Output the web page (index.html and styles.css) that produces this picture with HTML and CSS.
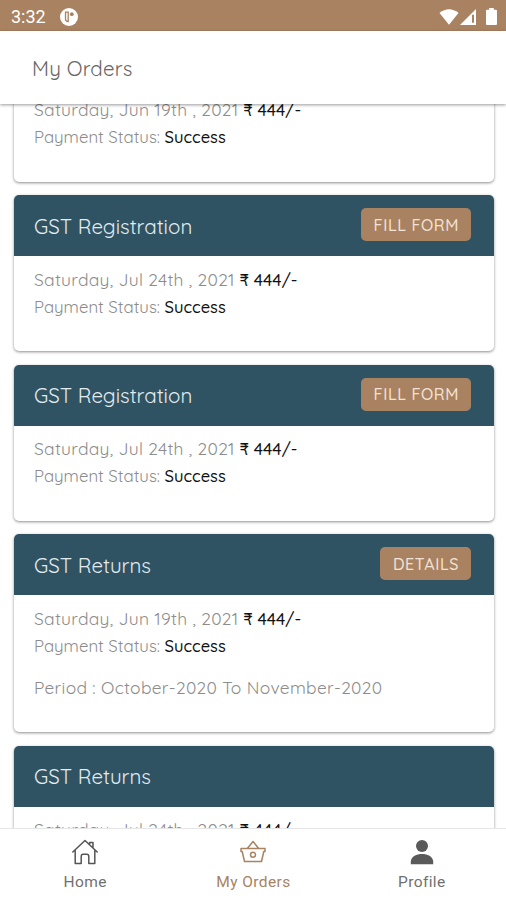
FILE: index.html
```html
<!DOCTYPE html>
<html lang="en">
<head>
    <meta charset="UTF-8">
    <meta name="viewport" content="width=device-width, initial-scale=1.0">
    <title>My Orders</title>
    <link rel="stylesheet" href="styles.css">
</head>
<body>
    <div class="status-bar">
        <span class="time">3:32</span>
        <svg class="app-badge" width="18" height="18" viewBox="0 0 18 18">
            <circle cx="9" cy="9" r="9" fill="#fff"/>
            <path d="M5.500 4.200H8.200V13.500Q5.500 13.500 5.500 11z" fill="none" stroke="#a98262" stroke-width="1.300"/>
            <circle cx="11.800" cy="6.200" r="1.900" fill="#a98262"/>
        </svg>
        <div class="status-icons">
            <svg width="20" height="16" viewBox="0 0 20 16"><path d="M0.500 4Q10 -3.500 19.500 4L10 15.700z" fill="#fff"/></svg>
            <svg width="17" height="16" viewBox="0 0 17 16"><path d="M16 0V16H0zM12 5.800V13.800H14V5.800z" fill="#fff" fill-rule="evenodd"/></svg>
            <svg class="battery" width="11" height="17" viewBox="0 0 11 17"><path d="M3.200 0h4.600v1.800H10q1 0 1 1V16q0 1-1 1H1q-1 0-1-1V2.800q0-1 1-1h2.200z" fill="#fff"/></svg>
        </div>
    </div>

    <header class="app-header">
        <h1>My Orders</h1>
    </header>

    <main class="orders">
        <div class="order-list">
            <div class="order-card">
                <div class="order-body">
                    <p><span class="date">Saturday, Jun 19th , 2021</span> <b class="price">₹ 444/-</b></p>
                    <p><span class="label">Payment Status:</span> <b class="state">Success</b></p>
                </div>
            </div>

            <div class="order-card">
                <div class="order-head"><h2>GST Registration</h2><button class="order-btn">FILL FORM</button></div>
                <div class="order-body">
                    <p><span class="date">Saturday, Jul 24th , 2021</span> <b class="price">₹ 444/-</b></p>
                    <p><span class="label">Payment Status:</span> <b class="state">Success</b></p>
                </div>
            </div>

            <div class="order-card">
                <div class="order-head"><h2>GST Registration</h2><button class="order-btn">FILL FORM</button></div>
                <div class="order-body">
                    <p><span class="date">Saturday, Jul 24th , 2021</span> <b class="price">₹ 444/-</b></p>
                    <p><span class="label">Payment Status:</span> <b class="state">Success</b></p>
                </div>
            </div>

            <div class="order-card">
                <div class="order-head"><h2>GST Returns</h2><button class="order-btn">DETAILS</button></div>
                <div class="order-body">
                    <p><span class="date">Saturday, Jun 19th , 2021</span> <b class="price">₹ 444/-</b></p>
                    <p><span class="label">Payment Status:</span> <b class="state">Success</b></p>
                    <p class="period">Period : October-2020 To November-2020</p>
                </div>
            </div>

            <div class="order-card">
                <div class="order-head"><h2>GST Returns</h2></div>
                <div class="order-body">
                    <p><span class="date">Saturday, Jul 24th , 2021</span> <b class="price">₹ 444/-</b></p>
                </div>
            </div>
        </div>
    </main>

    <nav class="tab-bar">
        <a class="tab">
            <svg width="28" height="28" viewBox="0 0 28 28" fill="none" stroke="#555" stroke-width="1.500" stroke-linejoin="round" stroke-linecap="round">
                <path d="M1.800 14L14 2.500L26.200 14M4.200 12.200V25.500H10.200V18.500Q10.200 16.300 12.200 16.300H15.800Q17.800 16.300 17.800 18.500V25.500H23.800V12.200M18.600 6.500V4.500H22V9.700"/>
            </svg>
            <span>Home</span>
        </a>
        <a class="tab active">
            <svg width="28" height="28" viewBox="0 0 28 28" fill="none" stroke="#a98262" stroke-width="1.500" stroke-linejoin="round">
                <path d="M2 10.500H26V13.500H24.800L22.500 23.500H5.500L3.200 13.500H2zM8.300 10.500L14 3.500L19.700 10.500"/>
                <circle cx="14" cy="16.800" r="2.500"/>
            </svg>
            <span>My Orders</span>
        </a>
        <a class="tab">
            <svg width="28" height="28" viewBox="0 0 28 28" fill="#5a5a5a">
                <circle cx="14" cy="8" r="6"/>
                <path d="M2.800 26.300V23C3.500 18.500 8.500 16 14 16S24.500 18.500 25.200 23V26.300z"/>
            </svg>
            <span>Profile</span>
        </a>
    </nav>
</body>
</html>
```
FILE: styles.css
```css
:root {
    --brown: #a98262;
    --teal: #2f5363;
    --muted: #8c8c8c;
}

* {
    box-sizing: border-box;
    margin: 0;
    padding: 0;
}

body {
    height: 900px;
    display: flex;
    flex-direction: column;
    overflow: hidden;
    background: #fff;
    font-family: Quicksand, Lato, 'Noto Sans', sans-serif;
}

.status-bar {
    height: 31px;
    flex: none;
    display: flex;
    align-items: center;
    padding: 2px 9px 0 11px;
    background: var(--brown);
    color: #fff;
}

.time {
    font: 18px Roboto, sans-serif;
    width: 49px;
}

.status-icons {
    margin-left: auto;
    display: flex;
    align-items: center;
    gap: 1px;
}

.battery {
    margin-left: 8px;
}

.app-header {
    height: 73px;
    flex: none;
    display: flex;
    align-items: center;
    padding: 1px 32px 0;
    background: #fff;
    box-shadow: 0 1px 3px rgba(0,0,0,0.4);
    z-index: 1;
}

h1 {
    font-size: 20.5px;
    font-weight: 400;
    letter-spacing: 0.2px;
    color: #666;
}

.orders {
    flex: 1;
    min-height: 0;
    overflow: hidden;
}

.order-list {
    display: flex;
    flex-direction: column;
    gap: 13.5px;
    padding: 0 12px 0 14px;
    margin-top: -17.5px;
}

.order-card {
    flex: none;
    border-radius: 5px;
    overflow: hidden;
    background: #fff;
    box-shadow: 0 1px 3px rgba(0,0,0,0.45);
}

.order-head {
    height: 61px;
    display: flex;
    align-items: center;
    justify-content: space-between;
    padding: 0 23px 0 20px;
    background: var(--teal);
}

h2 {
    font-size: 20.5px;
    font-weight: 400;
    color: #e3ebef;
}

.order-btn {
    height: 33px;
    padding: 0 12px 0 12.5px;
    border: none;
    border-radius: 5px;
    background: var(--brown);
    color: #f3e3d5;
    font-family: inherit;
    font-size: 16px;
    font-weight: 500;
    letter-spacing: 0.6px;
    margin-bottom: 2px;
}

.order-body {
    padding: 9.5px 20px 31.5px;
    font-size: 17px;
    line-height: 27px;
    color: var(--muted);
    white-space: nowrap;
}

.date, .period {
    font-size: 17.4px;
    letter-spacing: 0.3px;
}

.label {
    font-size: 16.8px;
}

.order-body b {
    font-weight: 500;
    color: #111;
}

.order-body .state {
    font-size: 16.5px;
}

.period {
    margin-top: 15px;
}

.tab-bar {
    height: 72px;
    flex: none;
    display: flex;
    background: #fff;
    border-top: 1px solid #e6e6e6;
    padding-left: 1px;
}

.tab {
    flex: 1;
    display: flex;
    flex-direction: column;
    align-items: center;
    gap: 4px;
    padding-top: 8.5px;
    font: 15.5px/24px Roboto, sans-serif;
    letter-spacing: 0.4px;
    color: #707070;
}

.active {
    color: var(--brown);
}
```
